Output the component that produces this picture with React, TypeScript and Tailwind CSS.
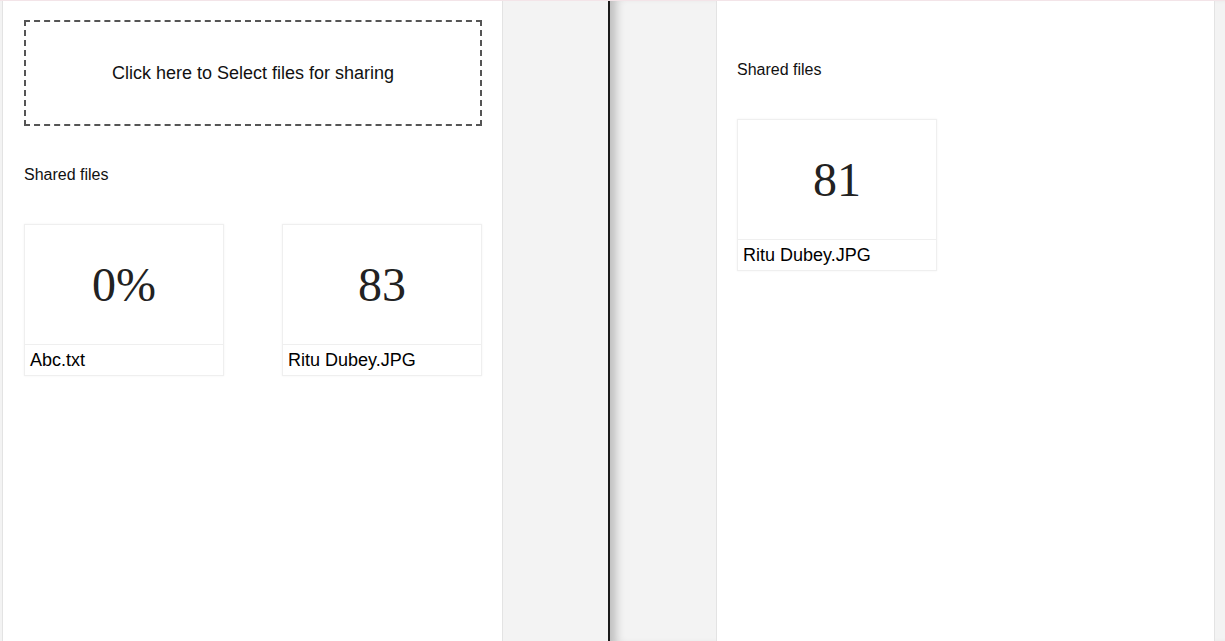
import React from "react";

type SharedFile = { progress: string; name: string };

function FileCard({ file }: { file: SharedFile }) {
  return (
    <div className="w-[200px] h-[152px] flex flex-col border border-[#efefef] bg-white shadow-[0_0_2px_rgba(0,0,0,0.06)]">
      <div className="h-[119px] flex items-center justify-center text-[48px] text-[#222] font-['Liberation_Serif',serif]">
        {file.progress}
      </div>
      <div className="flex-1 border-t border-[#efefef] px-[5px] text-[18px] leading-[30px] text-black">
        {file.name}
      </div>
    </div>
  );
}

export default function App() {
  const senderFiles: SharedFile[] = [
    { progress: "0%", name: "Abc.txt" },
    { progress: "83", name: "Ritu Dubey.JPG" },
  ];
  const receiverFiles: SharedFile[] = [{ progress: "81", name: "Ritu Dubey.JPG" }];

  return (
    <div className="w-[1225px] h-[641px] flex overflow-hidden bg-[#f3f3f3] border-t border-[#f3e4e8] font-['Liberation_Sans',Arial,sans-serif]">
      {/* sender side */}
      <div className="w-[608px] h-full pl-[2px]">
        <div className="w-[501px] h-full bg-white border-x border-[#e3e3e3] pl-[21px] pt-[19px]">
          <div className="w-[458px] h-[106px] border-2 border-dashed border-[#555] flex items-center justify-center text-[18px] text-[#111]">
            Click here to Select files for sharing
          </div>
          <div className="mt-[37px] text-[16px] text-[#111]">Shared files</div>
          <div className="mt-[37px] w-[458px] flex justify-between">
            {senderFiles.map((f) => (
              <FileCard key={f.name} file={f} />
            ))}
          </div>
        </div>
      </div>

      {/* divider */}
      <div className="w-[2px] h-full bg-[#1a1a1a]" />

      {/* receiver side */}
      <div className="flex-1 h-full pl-[106px] shadow-[inset_12px_0_10px_-6px_rgba(0,0,0,0.22)]">
        <div className="w-[499px] h-full bg-white border-x border-[#e3e3e3] pl-[20px] pt-[57px]">
          <div className="text-[16px] text-[#111]">Shared files</div>
          <div className="mt-[37px] flex">
            {receiverFiles.map((f) => (
              <FileCard key={f.name} file={f} />
            ))}
          </div>
        </div>
      </div>
    </div>
  );
}
